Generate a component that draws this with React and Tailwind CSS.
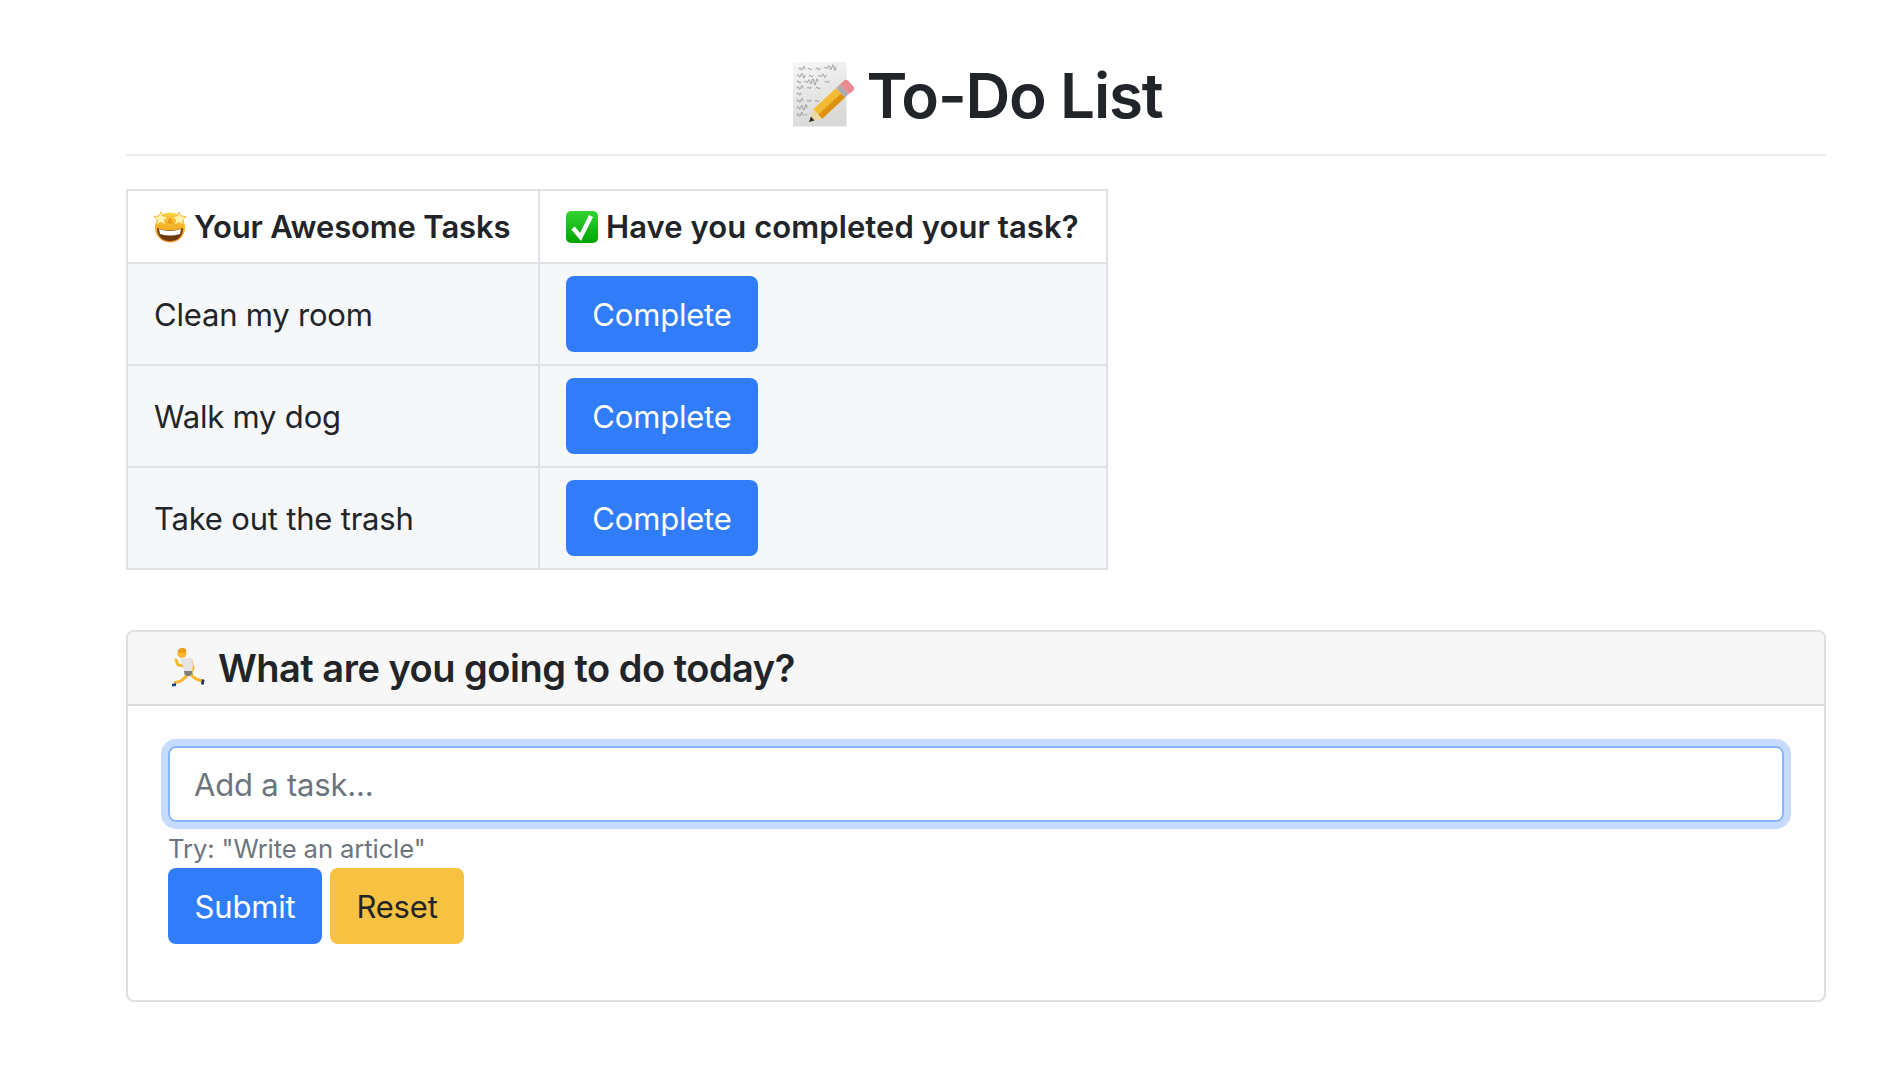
import React from 'react';

const MemoEmoji = () => (
    <svg viewBox="0 0 68 72" className="inline-block w-[68px] h-[72px] shrink-0">
        <defs>
            <linearGradient id="paper" x1="0" y1="0" x2="0.3" y2="1">
                <stop offset="0" stopColor="#f7f7f7" />
                <stop offset="1" stopColor="#d9d9d7" />
            </linearGradient>
            <linearGradient id="pencilBody" x1="0" y1="0" x2="1" y2="1">
                <stop offset="0" stopColor="#fbd04a" />
                <stop offset="1" stopColor="#e79f1c" />
            </linearGradient>
        </defs>
        <rect x="4" y="4" width="53.500" height="64.500" fill="url(#paper)" />
        <g fill="none" stroke="#3d3d3d" strokeWidth="0.7" strokeLinecap="round" opacity="0.6">
            <path d="M10 11q1-3 2 0t2-1 2 1M19 11q1-2 2 0t2 0M27 11q1-3 2 0t2-1M35 10q1-2 2 0t2-1 2 1 2-1 2 1 2-1" />
            <path d="M8 18q1-3 2 0t2-1 2 1 2-1M20 18q1-2 2 0t2 0M29 18q1-2 2 0t2-1 2 1 2-1" />
            <path d="M8 24q1-3 2 0t2 0M15 24q1-2 2 0t2-1 2 1 2-1 2 1 2 0 2-1M36 24q1-2 2 0t2-1" />
            <path d="M8 30q1-3 2 0t2-1 2 1M18 30q1-2 2 0t2-1M27 30q1-2 2 0t2 0" />
            <path d="M8 36q1-3 2 0t2-1" />
            <path d="M8 43q1-3 2 0t2-1 2 1M18 43q1-2 2 0t2-1M26 43q1-2 2 0t2 0" />
            <path d="M8 50q1-3 2 0t2-1 2 1 2-1 2 1" />
            <path d="M8 57q1-3 2 0t2-1 2 1M16 57q1-2 2 0" />
        </g>
        <g>
            <path d="M20 64L24.400 51.100 33.200 60.700Z" fill="#f0d7a6" />
            <path d="M20 64L21.900 58.600 25.500 62.600Z" fill="#2e2e2e" />
            <path d="M24.400 51.100L47.200 30 56 39.600 33.200 60.700Z" fill="url(#pencilBody)" />
            <path d="M29.500 56.600L52.300 35.500 56 39.600 33.200 60.700Z" fill="#dd9212" />
            <path d="M47.200 30L50.800 26.600 59.600 36.200 56 39.600Z" fill="#a9adb3" />
            <path d="M50.800 26.600L54.500 23a3.500 3.500 0 0 1 5 0l4.500 5a3.500 3.500 0 0 1 0 5l-4.400 3.200Z" fill="#e98b92" />
        </g>
    </svg>
);

const StarStruckEmoji = () => (
    <svg viewBox="0 0 40 40" className="inline-block w-[40px] h-[40px] shrink-0">
        <defs>
            <linearGradient id="face" x1="0" y1="0" x2="0" y2="1">
                <stop offset="0" stopColor="#ffd742" />
                <stop offset="1" stopColor="#ea8a10" />
            </linearGradient>
        </defs>
        <circle cx="20" cy="20.500" r="15" fill="url(#face)" />
        <path d="M7 21q13 5 26 0q-1 13-13 13T7 21Z" fill="#6d3a0c" />
        <path d="M9 22q11 4 22 0l-1 5q-10 3-20 0Z" fill="#fff" />
        <path d="M11 5l2 4 5 .5-3.500 3.500 1 5-4.500-2.500-4.500 2.500 1-5-3.500-3.500 5-.5Z" fill="#fff3b0" stroke="#f2a922" strokeWidth="0.8" />
        <path d="M29 5l2 4 5 .5-3.500 3.500 1 5-4.500-2.500-4.500 2.500 1-5-3.500-3.500 5-.5Z" fill="#fff3b0" stroke="#f2a922" strokeWidth="0.8" />
        <path d="M20 9l3 7.500h-6Z" fill="#f0981a" />
    </svg>
);

const CheckEmoji = () => (
    <svg viewBox="0 0 40 40" className="inline-block w-[40px] h-[40px] shrink-0">
        <defs>
            <linearGradient id="box" x1="0" y1="0" x2="0" y2="1">
                <stop offset="0" stopColor="#34d334" />
                <stop offset="1" stopColor="#00a400" />
            </linearGradient>
        </defs>
        <rect x="4" y="4" width="32" height="32" rx="5" fill="url(#box)" />
        <path d="M11 21l7.500 9L29 9" fill="none" stroke="#fff" strokeWidth="4.500" />
    </svg>
);

const RunnerEmoji = () => (
    <svg viewBox="0 0 44 44" className="inline-block w-[44px] h-[44px] shrink-0">
        <path d="M18 20l-6-1-2-5" fill="none" stroke="#f8b82e" strokeWidth="3" strokeLinecap="round" />
        <path d="M25 14l2 8-2 4" fill="none" stroke="#f8b82e" strokeWidth="3" strokeLinecap="round" />
        <path d="M15 13l11-1 1 7-1 6-8 0Z" fill="#e4e4e4" />
        <circle cx="16" cy="7.500" r="4.500" fill="#f8b82e" />
        <path d="M11.500 6a5 5 0 0 1 9-2l-1 3h-6Z" fill="#e8a01d" />
        <path d="M18 25l8 0 1 4-8 2Z" fill="#7d7d7d" />
        <path d="M21 30l-6 5-7 2" fill="none" stroke="#f8b82e" strokeWidth="3" />
        <path d="M25 29l5 4 6 2" fill="none" stroke="#f8b82e" strokeWidth="3" />
        <path d="M6 38l4-1 0 3-4 .5Z" fill="#1c3f94" />
        <path d="M36 33l2.500 1-1 5-2.500-1Z" fill="#1c2d6e" />
    </svg>
);

const tasks = ['Clean my room', 'Walk my dog', 'Take out the trash'];

export default function App() {
    return (
        <div className="min-h-[1068px] bg-white text-[#212529] font-['Inter',sans-serif] text-[31px] leading-[48px] tracking-[-0.2px]">
            <div className="ml-[126px] w-[1700px]">
                <h1 className="flex justify-center items-start pt-[58px] h-[156px] border-b-2 border-[#ecebf1] text-[62px] leading-[72px] font-semibold tracking-[-1.2px]">
                    <MemoEmoji />
                    <span className="ml-[9px] mt-[2px]">To-Do List</span>
                </h1>

                <table className="mt-[33px] w-[982px] table-fixed border-collapse">
                    <thead>
                        <tr>
                            <th className="w-[412px] border-2 border-[#dfe1e6] px-[26px] py-[12px] leading-[47px] text-left font-semibold tracking-[-0.15px]">
                                <span className="flex items-center whitespace-nowrap">
                                    <span className="-ml-[4px] mr-[4px] flex"><StarStruckEmoji /></span>
                                    Your Awesome Tasks
                                </span>
                            </th>
                            <th className="border-2 border-[#dfe1e6] px-[26px] py-[12px] leading-[47px] text-left font-semibold tracking-[0.08px]">
                                <span className="flex items-center whitespace-nowrap">
                                    <span className="-ml-[4px] mr-[4px] flex"><CheckEmoji /></span>
                                    Have you completed your task?
                                </span>
                            </th>
                        </tr>
                    </thead>
                    <tbody>
                        {tasks.map((task) => (
                            <tr key={task} className="bg-[#f6f7f9]">
                                <td className="border-2 border-[#dfe1e6] px-[26px] pt-[13px] pb-[11px]">{task}</td>
                                <td className="border-2 border-[#dfe1e6] px-[26px] py-[12px]">
                                    <button className="block h-[76px] w-[192px] pt-[2px] rounded-[8px] bg-[#317df9] text-white">Complete</button>
                                </td>
                            </tr>
                        ))}
                    </tbody>
                </table>

                <div className="mt-[60px] rounded-[8px] border-2 border-[#dfdfdf]">
                    <div className="flex items-center h-[74px] pl-[40px] rounded-t-[6px] bg-[#f7f7f7] border-b-2 border-[#d9d9d9] text-[38px] font-semibold leading-[48px] tracking-[-0.5px]">
                        <span className="-ml-[2px] mr-[8px] flex"><RunnerEmoji /></span>
                        What are you going to do today?
                    </div>
                    <div className="px-[40px] pt-[40px] pb-[56px]">
                        <input
                            readOnly
                            placeholder="Add a task..."
                            className="block w-full h-[76px] rounded-[8px] border-2 border-[#86b7fe] px-[24px] outline-none shadow-[0_0_0_7px_#c6dbfe] placeholder:text-[#6c757d]"
                        />
                        <div className="mt-[8px] text-[25.6px] leading-[38px] tracking-[-0.1px] text-[#6c757d]">Try: "Write an article"</div>
                        <div className="flex gap-[8px]">
                            <button className="h-[76px] w-[154px] pt-[2px] rounded-[8px] bg-[#317df9] text-white">Submit</button>
                            <button className="h-[76px] w-[134px] pt-[2px] rounded-[8px] bg-[#f7c142]">Reset</button>
                        </div>
                    </div>
                </div>
            </div>
        </div>
    );
}
